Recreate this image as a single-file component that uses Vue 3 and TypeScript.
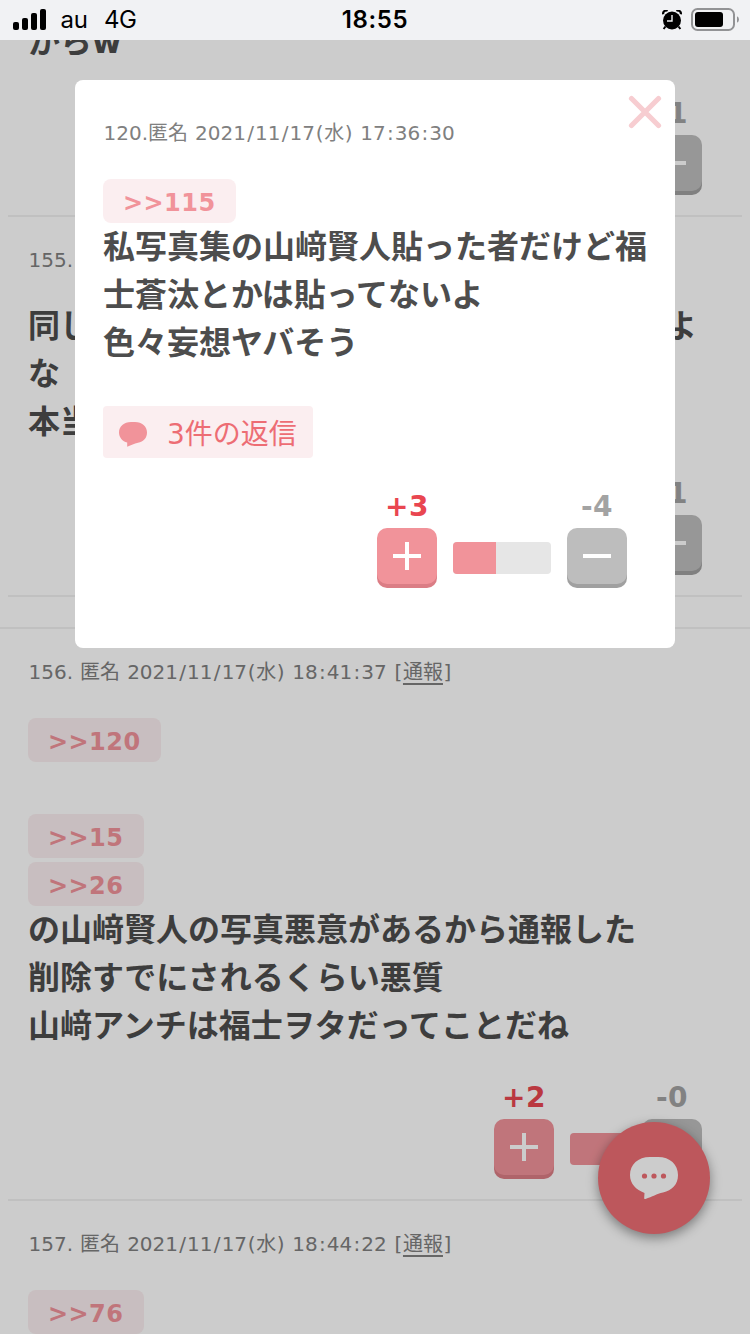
<script setup lang="ts">
interface Line {
  kind: 'text' | 'anchor' | 'blank'
  text?: string
  tail?: string
}
interface Post {
  id: number
  meta: string
  report: boolean
  lines: Line[]
  plus: string
  minus: string
  ratio: number
  voted: boolean
}

const t = (text: string, tail?: string): Line => ({ kind: 'text', text, tail })
const a = (text: string): Line => ({ kind: 'anchor', text })

const posts: Post[] = [
  { id: 154, meta: '', report: false, lines: [t('からw')], plus: '', minus: '-1', ratio: 100, voted: true },
  { id: 155, meta: '155.', report: false, lines: [t('同じ', 'よ'), t('な'), t('本当')], plus: '', minus: '-1', ratio: 100, voted: true },
  {
    id: 156,
    meta: '156. 匿名 2021/11/17(水) 18:41:37 ',
    report: true,
    lines: [
      a('>>120'),
      { kind: 'blank' },
      a('>>15'),
      a('>>26'),
      t('の山﨑賢人の写真悪意があるから通報した'),
      t('削除すでにされるくらい悪質'),
      t('山﨑アンチは福士ヲタだってことだね'),
    ],
    plus: '+2',
    minus: '-0',
    ratio: 100,
    voted: true,
  },
  { id: 157, meta: '157. 匿名 2021/11/17(水) 18:44:22 ', report: true, lines: [a('>>76')], plus: '', minus: '', ratio: 0, voted: false },
]

const popup = {
  meta: '120.匿名 2021/11/17(水) 17:36:30',
  anchor: '>>115',
  lines: ['私写真集の山﨑賢人貼った者だけど福', '士蒼汰とかは貼ってないよ', '色々妄想ヤバそう'],
  ratio: 44,
}

// Separators get wider side bearings than the digits around them.
const pieces = (s: string): string[] => s.split(/([/:()])/).filter((p) => p !== '')
const pieceClass = (p: string) => (p === '/' || p === ':' ? 'wide' : p === '(' || p === ')' ? 'paren' : '')
</script>

<template>
  <div class="screen">
    <header class="status">
      <div class="side">
        <svg class="signal" width="34" height="22" viewBox="0 0 34 22">
          <rect x="0" y="13" width="6" height="8" rx="2" />
          <rect x="9" y="9" width="6" height="12" rx="2" />
          <rect x="18" y="4" width="6" height="17" rx="2" />
          <rect x="27" y="0" width="6" height="21" rx="2" />
        </svg>
        <span class="carrier">au</span>
        <span class="network">4G</span>
      </div>
      <div class="clock">18:55</div>
      <div class="side right">
        <svg width="20" height="20" viewBox="0 0 20 20">
          <circle cx="10" cy="10.500" r="9" />
          <path d="M1.200 4.200A3 3 0 0 1 5.600.9" fill="none" stroke="#000" stroke-width="2.200" />
          <path d="M14.400.9a3 3 0 0 1 4.400 3.300" fill="none" stroke="#000" stroke-width="2.200" />
          <path d="M3.500 16.500 1.600 19M16.500 16.500l1.900 2.500" stroke="#000" stroke-width="2" />
          <path d="M10 5v6H5" fill="none" stroke="#f1f2f4" stroke-width="1.400" />
        </svg>
        <svg width="48" height="24" viewBox="0 0 48 24">
          <rect x="1" y="1" width="42" height="21" rx="5.500" fill="none" stroke="#929395" stroke-width="2" />
          <rect x="4" y="4" width="28" height="15" rx="3" />
          <path d="M46 8.200q2 1 2 3.300t-2 3.300z" fill="#929395" />
        </svg>
      </div>
    </header>

    <main class="page">
      <div class="feed">
        <article v-for="p in posts" :key="p.id" class="post" :class="'post-' + p.id">
          <div v-if="p.meta" class="meta">
            <span v-for="(s, i) in pieces(p.meta)" :key="i" :class="pieceClass(s)">{{ s }}</span
            ><template v-if="p.report"><span class="paren">[</span><u>通報</u><span class="paren">]</span></template>
          </div>
          <div class="body">
            <div v-for="(l, i) in p.lines" :key="i" class="line">
              <span v-if="l.kind === 'anchor'" class="chip">{{ l.text }}</span>
              <span v-else-if="l.kind === 'text'" class="words">{{ l.text }}</span>
              <span v-if="l.tail" class="words tail">{{ l.tail }}</span>
            </div>
          </div>
          <div v-if="p.voted" class="vote">
            <div class="choice">
              <b class="count up">{{ p.plus }}</b>
              <span class="key plus"></span>
            </div>
            <div class="bar short"><i :style="{ width: p.ratio + '%' }"></i></div>
            <div class="choice">
              <b class="count down">{{ p.minus }}</b>
              <span class="key minus"></span>
            </div>
          </div>
        </article>
      </div>
      <div class="fab">
        <svg width="48" height="42" viewBox="0 0 48 42">
          <path fill="#fff" d="M20 0h8C40 0 48 7.500 48 18c0 9.500-6 15.500-15 17.500-6.500 1.500-10.500 4-17.500 6.500q-1.500.3-1.300-1.200l.3-4.800C6 32.500 0 27 0 18 0 7.500 8 0 20 0z" />
          <g fill="#ed6d74">
            <circle cx="14.500" cy="19" r="2.600" />
            <circle cx="24" cy="19" r="2.600" />
            <circle cx="33.500" cy="19" r="2.600" />
          </g>
        </svg>
      </div>
    </main>

    <div class="shade">
      <section class="popup">
        <svg class="close" width="34" height="34" viewBox="0 0 34 34">
          <path d="M3.500 3.500l27 27M30.500 3.500l-27 27" fill="none" stroke="#f7cdd1" stroke-width="5.200" stroke-linecap="round" />
        </svg>
        <div class="meta">
          <span v-for="(s, i) in pieces(popup.meta)" :key="i" :class="pieceClass(s)">{{ s }}</span>
        </div>
        <div class="body">
          <div class="line"><span class="chip">{{ popup.anchor }}</span></div>
          <div v-for="l in popup.lines" :key="l" class="line"><span class="words">{{ l }}</span></div>
        </div>
        <div class="replies">
          <svg width="28" height="25" viewBox="0 0 28 25">
            <path fill="#f1939a" d="M12 0h4c7 0 12 4.300 12 10.500 0 5.500-3.500 9.300-9 10.200-4 .6-6.500 2.500-10.800 4.100V20.500C3.500 19.300 0 15.500 0 10.500 0 4.300 5 0 12 0z" />
          </svg>
          <span>3件の返信</span>
        </div>
        <div class="vote">
          <div class="choice">
            <b class="count up">+3</b>
            <span class="key plus"></span>
          </div>
          <div class="bar"><i :style="{ width: popup.ratio + '%' }"></i></div>
          <div class="choice">
            <b class="count down">-4</b>
            <span class="key minus"></span>
          </div>
        </div>
      </section>
    </div>
  </div>
</template>

<style>
body {
  margin: 0;
}
</style>

<style scoped>
.screen {
  position: relative;
  width: 750px;
  height: 1334px;
  overflow: hidden;
  display: flex;
  flex-direction: column;
  background: #fff;
  color: #4d4d4d;
  font-family: "DejaVu Sans", "Noto Sans CJK JP", sans-serif;
}
.status {
  height: 40px;
  flex: none;
  display: flex;
  align-items: center;
  justify-content: space-between;
  box-sizing: border-box;
  padding: 0 11px 0 13px;
  background: #f1f2f4;
  color: #000;
  font: 24px/40px Inter, sans-serif;
}
.side {
  width: 300px;
  display: flex;
  align-items: center;
  line-height: 42px;
}
.side.right {
  justify-content: flex-end;
  gap: 9px;
}
.carrier {
  margin-left: 13.500px;
  letter-spacing: -0.3px;
}
.network {
  margin-left: 16.500px;
  letter-spacing: -0.5px;
}
.clock {
  margin-left: -2px;
  line-height: 42px;
  font-weight: 600;
  letter-spacing: 0.6px;
}
.page {
  flex: 1;
  min-height: 0;
  position: relative;
  overflow: hidden;
}
.feed {
  margin-top: -20px;
}
.post {
  margin: 0 8px;
  padding: 0 20px 20px;
  border-bottom: 2px solid #f0f0f0;
}
.post-156 {
  position: relative;
  margin-top: 30px;
  padding-top: 2px;
}
.post-156::before {
  content: "";
  position: absolute;
  left: -8px;
  right: -8px;
  top: 0;
  height: 2px;
  background: #f0f0f0;
}
.meta {
  padding: 28px 0 29px 0.5px;
  height: 30px;
  font-size: 20px;
  line-height: 30px;
  white-space: pre;
  word-spacing: 0.7px;
  color: #808080;
}
.meta u {
  text-underline-offset: 4px;
  text-decoration-thickness: 1.5px;
}
.wide {
  padding: 0 1.17px;
}
.paren {
  padding: 0 0.65px;
}
.line {
  height: 48px;
  display: flex;
  align-items: center;
}
.words {
  height: 48px;
  font-size: 32px;
  line-height: 44px;
  font-weight: bold;
  white-space: pre;
}
.tail {
  margin-left: 573px;
}
.chip {
  height: 44px;
  padding: 0 20.5px 0 20px;
  border-radius: 8px;
  background: #fbeef0;
  color: #f1939a;
  font-size: 24px;
  line-height: 48px;
  font-weight: bold;
  letter-spacing: 0.45px;
}
.vote {
  display: flex;
  justify-content: flex-end;
  align-items: flex-end;
  gap: 16px;
  padding: 30px 20px 4px 0;
}
.choice {
  width: 60px;
  display: flex;
  flex-direction: column;
  align-items: center;
}
.count {
  height: 37px;
  font-size: 28px;
  line-height: 32px;
  letter-spacing: 0.5px;
}
.up {
  color: #e94650;
}
.down {
  color: #a3a3a3;
}
.key {
  position: relative;
  width: 60px;
  height: 56px;
  border-radius: 10px;
}
.key.plus {
  background: #f1939a;
  box-shadow: 0 4px 0 #db7d85;
}
.key.minus {
  background: #bdbdbd;
  box-shadow: 0 4px 0 #a0a0a0;
}
.key::before,
.key.plus::after {
  content: "";
  position: absolute;
  background: #fff;
}
.key::before {
  left: 16px;
  top: 26px;
  width: 28px;
  height: 4px;
}
.key.plus::after {
  left: 28px;
  top: 14px;
  width: 4px;
  height: 28px;
}
.bar {
  width: 98px;
  height: 32px;
  margin-bottom: 10px;
  border-radius: 4px;
  overflow: hidden;
  background: #e6e6e6;
}
.bar.short {
  width: 56px;
}
.bar i {
  display: block;
  height: 100%;
  background: #f1939a;
}
.fab {
  position: absolute;
  left: 598px;
  top: 1082px;
  width: 112px;
  height: 112px;
  display: flex;
  align-items: center;
  justify-content: center;
  border-radius: 50%;
  background: #ed6d74;
  box-shadow: 0 4px 12px rgba(0, 0, 0, 0.4);
}
.shade {
  position: absolute;
  left: 0;
  right: 0;
  top: 40px;
  bottom: 0;
  background: rgba(0, 0, 0, 0.2);
}
.popup {
  position: relative;
  box-sizing: border-box;
  width: 600px;
  height: 568px;
  margin: 40px auto 0;
  padding: 10px 28px 0;
  border-radius: 8px;
  background: #fff;
}
.close {
  position: absolute;
  right: 13px;
  top: 15px;
}
.replies {
  box-sizing: border-box;
  width: 210px;
  height: 52px;
  margin-top: 37px;
  padding: 0 16px;
  display: flex;
  align-items: center;
  gap: 20px;
  border-radius: 4px;
  background: #fbeef0;
  color: #ed6d74;
  font-size: 28px;
  white-space: nowrap;
}
.replies svg {
  margin-top: 4px;
}
.replies span {
  height: 52px;
  line-height: 58px;
}
.popup .vote {
  padding-top: 33px;
}
</style>
